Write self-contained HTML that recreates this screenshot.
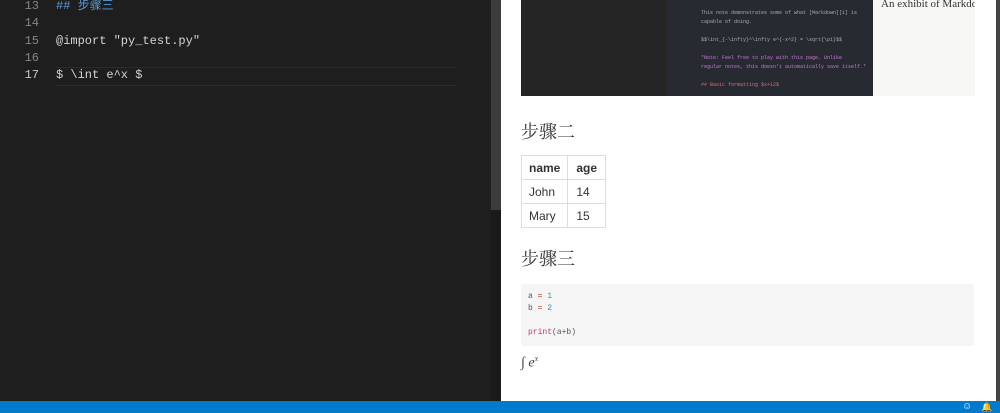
<!DOCTYPE html><html><head><meta charset="utf-8"><style>
body{margin:0;width:1000px;height:413px;overflow:hidden;position:relative;background:#1e1e1e;font-family:"Liberation Sans","Noto Sans CJK SC",sans-serif}
.ed{position:absolute;left:0;top:0;width:491px;height:401px;background:#1e1e1e;font-family:"Liberation Mono","Noto Sans CJK SC",monospace;font-size:12px;line-height:17px}
.ln{position:absolute;left:0;width:39px;text-align:right;color:#858585}
.tx{position:absolute;left:56px;color:#d4d4d4;white-space:pre}
.sb{position:absolute;left:491px;top:0;width:10px;height:401px;background:#1a1a1a}
.sl{position:absolute;left:491px;top:0;width:10px;height:210px;background:#3c3c3c}
.pv{position:absolute;left:501px;top:0;width:495px;height:401px;background:#fff}
.rs{position:absolute;left:996px;top:0;width:4px;height:401px;background:#444}
.st{position:absolute;left:0;top:401px;width:1000px;height:12px;background:#007acc}
h2{position:absolute;left:521px;margin:0;font-family:"Noto Serif CJK SC",serif;font-weight:400;font-size:18px;color:#333}
table{position:absolute;left:521px;top:155px;border-collapse:collapse;font-size:12px;color:#333}
td,th{border:1px solid #ddd;padding:0 8px;height:23px;text-align:left}
.code{position:absolute;left:521px;top:284px;width:453px;height:62px;background:#f5f5f5;border-radius:3px;font-family:"Liberation Mono",monospace;font-size:8px;color:#555;line-height:12px;padding:7px;box-sizing:border-box;white-space:pre}
</style></head><body>
<div class="ed">
<div class="ln" style="top:-2px">13</div><div class="tx" style="top:-2px;color:#569cd6">## 步骤三</div>
<div class="ln" style="top:15px">14</div>
<div class="ln" style="top:33px">15</div><div class="tx" style="top:33px">@import "py_test.py"</div>
<div class="ln" style="top:50px">16</div>
<div style="position:absolute;left:56px;top:67px;width:400px;height:17px;border-top:1px solid #2c2c2c;border-bottom:1px solid #2c2c2c"></div>
<div class="ln" style="top:67px;color:#c6c6c6">17</div><div class="tx" style="top:67px">$ \int e^x $</div>
</div>
<div class="sb"></div><div class="sl"></div>
<div class="pv"></div><div class="rs"></div>
<div style="position:absolute;left:521px;top:0;width:146px;height:96px;background:#252526"></div>
<div style="position:absolute;left:667px;top:0;width:206px;height:96px;overflow:hidden;background:#272a30;font-family:'Liberation Mono',monospace;font-size:5px;color:#aab;line-height:9px;padding-left:34px;box-sizing:border-box;white-space:pre">
This note demonstrates some of what [Markdown][1] is
capable of doing.

$$\int_{-\infty}^\infty e^{-x^2} = \sqrt{\pi}$$

<span style="color:#c678dd">*Note: Feel free to play with this page. Unlike
regular notes, this doesn't automatically save itself.*</span>

<span style="color:#e06c75">## Basic formatting $x+12$</span>

Paragraphs can be written like so. A paragraph is the
basic block of Markdown.</div>
<div style="position:absolute;left:873px;top:0;width:102px;height:96px;overflow:hidden;background:#f7f7f5;font-family:'Liberation Serif',serif;font-size:11px;color:#333;padding:0 8px;box-sizing:border-box;white-space:nowrap;line-height:9px">An exhibit of Markdown</div>
<h2 style="top:118px">步骤二</h2>
<table><tr><th style="padding:0 7px">name</th><th style="padding:0 8px">age</th></tr><tr><td style="padding:0 7px">John</td><td>14</td></tr><tr><td style="padding:0 7px">Mary</td><td>15</td></tr></table>
<h2 style="top:245px">步骤三</h2>
<div class="code">a <span style="color:#c33">=</span> <span style="color:#29c">1</span>
b <span style="color:#c33">=</span> <span style="color:#29c">2</span>

<span style="color:#c37">print</span>(a+b)</div>
<div style="position:absolute;left:521px;top:354px;font-family:'Liberation Serif',serif;font-style:italic;font-size:14px;color:#444">∫ e<sup style="font-size:8px">x</sup></div>
<div class="st"><span style="position:absolute;left:962px;top:1px;color:#fff;font-size:10px;line-height:10px">☺</span><span style="position:absolute;left:981px;top:1px;color:#fff;font-size:9px;line-height:10px">🔔</span></div>
</body></html>
